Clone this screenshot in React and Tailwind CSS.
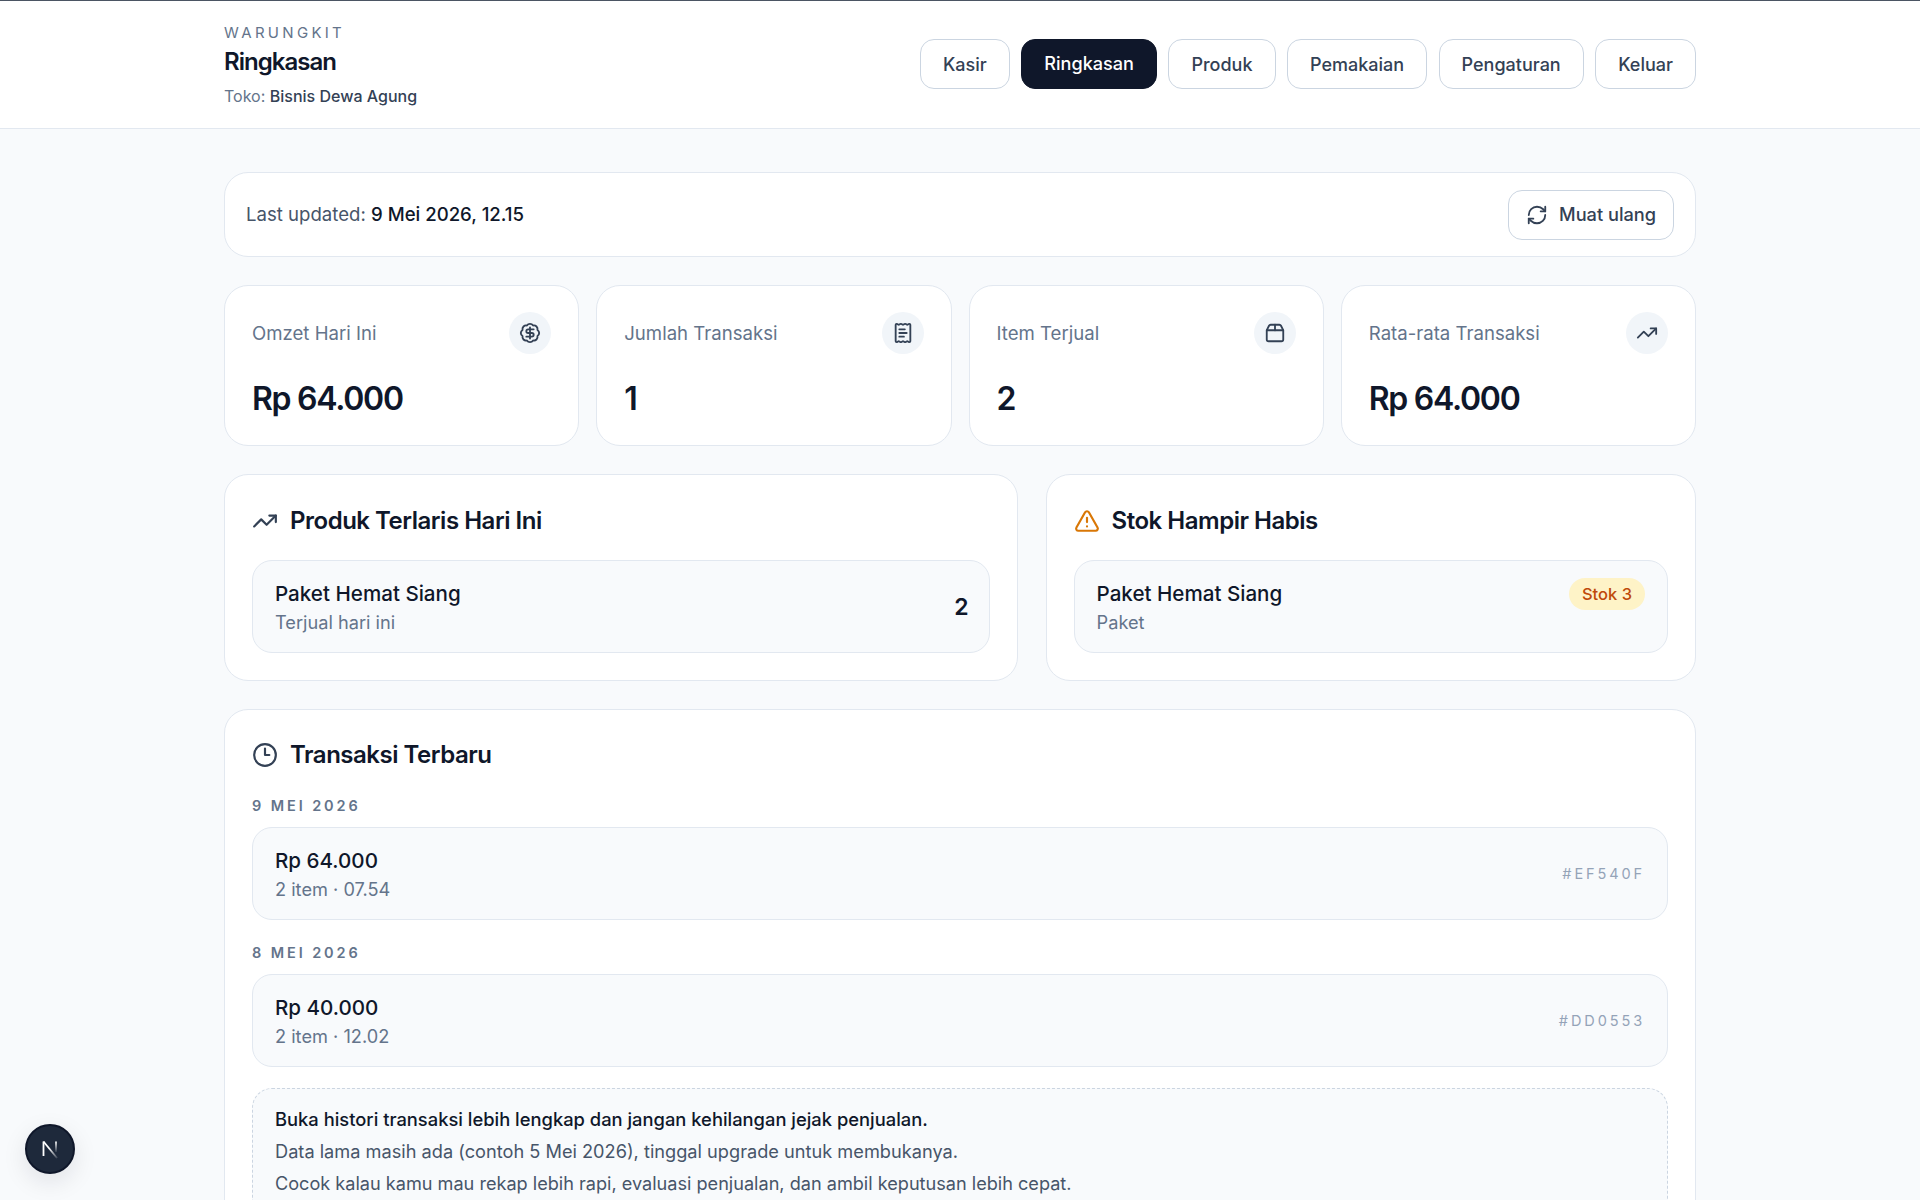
import React from "react";
import { BadgeDollarSign, ReceiptText, Package2, TrendingUp, TriangleAlert, Clock3, RefreshCw } from "lucide-react";

const navItems = ["Kasir", "Ringkasan", "Produk", "Pemakaian", "Pengaturan", "Keluar"];

function Stat({ label, value, Icon }) {
  return (
    <div className="h-[161px] rounded-[24px] border border-[#e2e8f0] bg-white px-[27px] pt-[26px]">
      <div className="flex items-center justify-between">
        <span className="pt-px text-[18.6px] text-[#64748b]">{label}</span>
        <span className="flex h-[42px] w-[42px] items-center justify-center rounded-full bg-[#f1f5f9] text-[#334155]">
          <Icon size={22} strokeWidth={2} />
        </span>
      </div>
      <div className="mt-[21px] text-[32px] leading-[48px] font-semibold tracking-[-0.04em] text-[#0f172a]">{value}</div>
    </div>
  );
}

function Row({ title, sub, right }) {
  return (
    <div className="flex h-[93px] items-start justify-between rounded-[20px] border border-[#e2e8f0] bg-[#f8fafc] px-[22px] pt-[17px]">
      <div>
        <div className="text-[20.6px] leading-[32px] font-medium text-[#0f172a]">{title}</div>
        <div className="text-[18.2px] leading-[25px] text-[#64748b]">{sub}</div>
      </div>
      {right}
    </div>
  );
}

function Heading({ icon, children }) {
  return (
    <div className="flex items-center gap-[12px]">
      {icon}
      <h2 className="text-[24px] leading-[32px] font-semibold tracking-[-0.02em] text-[#0f172a]">{children}</h2>
    </div>
  );
}

function Section({ className, children }) {
  return <section className={`rounded-[24px] border border-[#e2e8f0] bg-white px-[27px] pb-[27px] ${className}`}>{children}</section>;
}

function DateLabel({ className, children }) {
  return <div className={`text-[14.5px] leading-[24px] font-semibold tracking-[0.2em] text-[#64748b] ${className}`}>{children}</div>;
}

function TxCode({ children }) {
  return <span className="mb-[17px] self-center text-[14.5px] tracking-[0.2em] text-[#94a3b8]">{children}</span>;
}

export default function App() {
  return (
    <div className="h-screen overflow-hidden bg-[#f8fafc] font-['Inter',sans-serif] text-[#0f172a]">
      <header className="h-[129px] border-t border-b border-t-[#4b5563] border-b-[#e2e8f0] bg-white">
        <div className="mx-auto flex h-full w-[1472px] items-center justify-between">
          <div className="mb-px">
            <div className="text-[15px] leading-[24px] tracking-[0.22em] text-[#64748b]">WARUNGKIT</div>
            <h1 className="text-[24px] leading-[34px] font-semibold tracking-[-0.04em] text-[#0f172a]">Ringkasan</h1>
            <div className="mt-[5px] text-[16px] leading-[24px] text-[#64748b]">
              Toko: <span className="font-medium text-[#334155]">Bisnis Dewa Agung</span>
            </div>
          </div>
          <nav className="mb-px flex items-center gap-[11.5px]">
            {navItems.map((item) =>
              item === "Ringkasan" ? (
                <button key={item} className="h-[50px] rounded-[14px] border border-[#0f172a] bg-[#0f172a] px-[22px] text-[18.1px] font-medium text-white">
                  {item}
                </button>
              ) : (
                <button key={item} className="h-[50px] rounded-[14px] border border-[#cbd5e1] bg-white px-[22px] text-[18px] font-medium text-[#334155]">
                  {item}
                </button>
              )
            )}
          </nav>
        </div>
      </header>

      <main className="mx-auto flex w-[1472px] flex-col gap-[28px] pt-[43px]">
        <div className="flex h-[85px] items-center justify-between rounded-[24px] border border-[#e2e8f0] bg-white px-[21px]">
          <div className="text-[18.6px] text-[#475569]">
            Last updated: <span className="font-medium text-[#0f172a]">9 Mei 2026, 12.15</span>
          </div>
          <button className="flex h-[50px] items-center gap-[11px] rounded-[14px] border border-[#cbd5e1] bg-white px-[17px] text-[18.2px] font-medium text-[#334155]">
            <RefreshCw size={22} />
            Muat ulang
          </button>
        </div>

        <div className="grid grid-cols-4 gap-[17px]">
          <Stat label="Omzet Hari Ini" value="Rp 64.000" Icon={BadgeDollarSign} />
          <Stat label="Jumlah Transaksi" value="1" Icon={ReceiptText} />
          <Stat label="Item Terjual" value="2" Icon={Package2} />
          <Stat label="Rata-rata Transaksi" value="Rp 64.000" Icon={TrendingUp} />
        </div>

        <div className="grid grid-cols-[1.22fr_1fr] gap-[28px]">
          <Section className="h-[207px] pt-[30px]">
            <Heading icon={<TrendingUp size={26} className="text-[#334155]" />}>Produk Terlaris Hari Ini</Heading>
            <div className="mt-[23px]">
              <Row
                title="Paket Hemat Siang"
                sub="Terjual hari ini"
                right={<span className="-mr-[2px] mb-[15px] self-center text-[23px] font-semibold text-[#0f172a]">2</span>}
              />
            </div>
          </Section>
          <Section className="h-[207px] pt-[30px]">
            <Heading icon={<TriangleAlert size={26} className="text-[#d97706]" />}>Stok Hampir Habis</Heading>
            <div className="mt-[23px]">
              <Row
                title="Paket Hemat Siang"
                sub="Paket"
                right={<span className="flex h-[32px] items-center rounded-full bg-[#fef3c7] px-[13px] text-[16.5px] font-[550] text-[#bf4a0a]">Stok 3</span>}
              />
            </div>
          </Section>
        </div>

        <Section className="pt-[29px]">
          <Heading icon={<Clock3 size={26} className="text-[#334155]" />}>Transaksi Terbaru</Heading>
          <DateLabel className="mt-[23px]">9 MEI 2026</DateLabel>
          <div className="mt-[9px]">
            <Row title="Rp 64.000" sub="2 item · 07.54" right={<TxCode>#EF540F</TxCode>} />
          </div>
          <DateLabel className="mt-[21px]">8 MEI 2026</DateLabel>
          <div className="mt-[9px]">
            <Row title="Rp 40.000" sub="2 item · 12.02" right={<TxCode>#DD0553</TxCode>} />
          </div>
          <div className="mt-[21px] rounded-[20px] border border-dashed border-[#cbd5e1] bg-[#f8fafc] px-[22px] pt-[14px] pb-[40px]">
            <p className="text-[18.35px] leading-[32px] font-medium text-[#0f172a]">Buka histori transaksi lebih lengkap dan jangan kehilangan jejak penjualan.</p>
            <p className="text-[18.2px] leading-[32px] text-[#475569]">Data lama masih ada (contoh 5 Mei 2026), tinggal upgrade untuk membukanya.</p>
            <p className="text-[18.12px] leading-[32px] text-[#475569]">Cocok kalau kamu mau rekap lebih rapi, evaluasi penjualan, dan ambil keputusan lebih cepat.</p>
          </div>
        </Section>
      </main>

      <button className="absolute bottom-[26px] left-[25px] flex h-[50px] w-[50px] items-center justify-center rounded-full border-2 border-[#0f172a] bg-[#1e293b] shadow-[0_8px_24px_rgba(15,23,42,0.1)]" aria-label="Next.js">
        <svg width="24" height="24" viewBox="0 0 24 24" fill="none">
          <defs>
            <linearGradient id="nextDiag" x1="5" y1="4" x2="19" y2="20" gradientUnits="userSpaceOnUse">
              <stop offset="0.45" stopColor="#fff" />
              <stop offset="1" stopColor="#fff" stopOpacity="0.2" />
            </linearGradient>
            <linearGradient id="nextRight" x1="18" y1="4" x2="18" y2="15" gradientUnits="userSpaceOnUse">
              <stop offset="0" stopColor="#fff" />
              <stop offset="1" stopColor="#fff" stopOpacity="0.1" />
            </linearGradient>
          </defs>
          <path d="M5.5 4.5V19" stroke="#fff" strokeWidth="1.8" />
          <path d="M5.5 4.5L19 21" stroke="url(#nextDiag)" strokeWidth="1.8" />
          <path d="M18 4.5V15" stroke="url(#nextRight)" strokeWidth="1.8" />
        </svg>
      </button>
    </div>
  );
}
